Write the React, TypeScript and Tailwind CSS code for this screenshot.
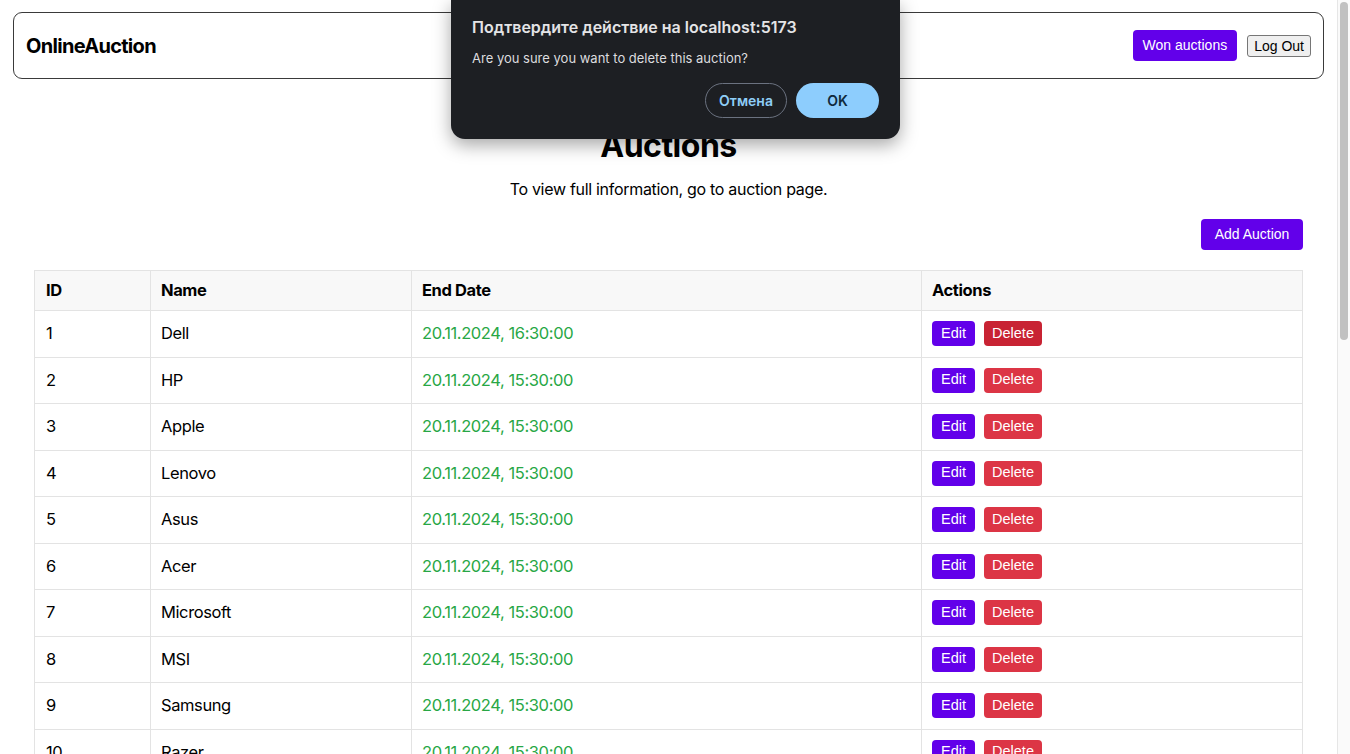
const rows = [
  { id: 1, name: "Dell", date: "20.11.2024, 16:30:00" },
  { id: 2, name: "HP", date: "20.11.2024, 15:30:00" },
  { id: 3, name: "Apple", date: "20.11.2024, 15:30:00" },
  { id: 4, name: "Lenovo", date: "20.11.2024, 15:30:00" },
  { id: 5, name: "Asus", date: "20.11.2024, 15:30:00" },
  { id: 6, name: "Acer", date: "20.11.2024, 15:30:00" },
  { id: 7, name: "Microsoft", date: "20.11.2024, 15:30:00" },
  { id: 8, name: "MSI", date: "20.11.2024, 15:30:00" },
  { id: 9, name: "Samsung", date: "20.11.2024, 15:30:00" },
  { id: 10, name: "Razer", date: "20.11.2024, 15:30:00" },
];

function ConfirmDialog() {
  return (
    <div className="absolute left-[451px] top-0 w-[449px] h-[139px] bg-[#1d1f23] rounded-b-[14px] shadow-[0_6px_18px_rgba(0,0,0,0.35)] px-[21px] pt-[18px] font-['Inter',sans-serif]">
      <div className="text-[16px] font-semibold text-[#e4e4e6] leading-[19px]">
        Подтвердите действие на localhost:5173
      </div>
      <div className="mt-[13px] text-[13px] text-[#dcdcdf] leading-[16px]">
        Are you sure you want to delete this auction?
      </div>
      <div className="mt-[17px] flex justify-end gap-[9px]">
        <button className="w-[82px] h-[35px] rounded-full border border-[#6b7280] text-[#8ecdf7] text-[14px] font-semibold">
          Отмена
        </button>
        <button className="w-[83px] h-[35px] rounded-full bg-[#8dcdfd] text-[#0f2a3c] text-[14px] font-semibold">
          OK
        </button>
      </div>
    </div>
  );
}

export default function App() {
  return (
    <div className="relative h-screen overflow-hidden flex bg-white font-['Inter',sans-serif] text-black">
      <div className="flex-1 min-w-0 pt-[12px]">
        <nav className="mx-[13px] h-[67px] border border-[#3a3a3a] rounded-[9px] flex items-center justify-between pl-[12px] pr-[12px]">
          <span className="text-[20px] font-bold tracking-[-0.7px]">OnlineAuction</span>
          <div className="flex items-center gap-[10px] font-['Liberation_Sans',Arial,sans-serif]">
            <button className="h-[31px] px-[10px] rounded-[4px] bg-[#6200ea] text-white text-[14px]">
              Won auctions
            </button>
            <button className="h-[22px] px-[6px] rounded-[3px] border border-[#767676] bg-[#efefef] text-[14px] text-black">
              Log Out
            </button>
          </div>
        </nav>

        <main className="pl-[34px] pr-[34px]">
          <h1 className="mt-[48px] text-center text-[32px] font-bold leading-[38px] tracking-[-0.5px]">Auctions</h1>
          <p className="mt-[14px] text-center text-[16px] leading-[20px] tracking-[-0.3px]">
            To view full information, go to auction page.
          </p>
          <div className="mt-[20px] flex justify-end">
            <button className="h-[31px] w-[102px] rounded-[4px] bg-[#6200ea] text-white text-[14px] font-['Liberation_Sans',Arial,sans-serif]">
              Add Auction
            </button>
          </div>

          <table className="mt-[20px] w-[1269px] border-collapse text-[16.5px] tracking-[-0.4px]">
            <thead>
              <tr className="h-[40px] bg-[#f8f8f8]">
                <th className="w-[116px] border border-[#e3e3e3] px-[11px] text-left font-bold">ID</th>
                <th className="w-[261px] border border-[#e3e3e3] px-[10px] text-left font-bold">Name</th>
                <th className="w-[510px] border border-[#e3e3e3] px-[10px] text-left font-bold">End Date</th>
                <th className="border border-[#e3e3e3] px-[10px] text-left font-bold">Actions</th>
              </tr>
            </thead>
            <tbody>
              {rows.map((r) => (
                <tr key={r.id} className="h-[46.5px]">
                  <td className="border border-[#e3e3e3] px-[11px]">{r.id}</td>
                  <td className="border border-[#e3e3e3] px-[10px]">{r.name}</td>
                  <td className="border border-[#e3e3e3] px-[10px] text-[#28a745]">{r.date}</td>
                  <td className="border border-[#e3e3e3] px-[10px]">
                    <div className="flex gap-[9px] tracking-normal font-['Liberation_Sans',Arial,sans-serif]">
                      <button className="h-[25px] w-[43px] rounded-[4px] bg-[#6200ea] text-white text-[14.5px]">
                        Edit
                      </button>
                      <button
                        className={
                          r.id === 1
                            ? "h-[25px] w-[58px] rounded-[4px] bg-[#c82333] text-white text-[14.5px]"
                            : "h-[25px] w-[58px] rounded-[4px] bg-[#dc3545] text-white text-[14.5px]"
                        }
                      >
                        Delete
                      </button>
                    </div>
                  </td>
                </tr>
              ))}
            </tbody>
          </table>
        </main>
      </div>

      {/* fake browser scrollbar */}
      <div className="w-[13px] shrink-0 bg-[#fafafa] border-l border-[#e6e6e6] pt-[2px] pl-[2px]">
        <div className="w-[8px] h-[338px] rounded-full bg-[#c1c1c1]" />
      </div>

      <ConfirmDialog />
    </div>
  );
}
